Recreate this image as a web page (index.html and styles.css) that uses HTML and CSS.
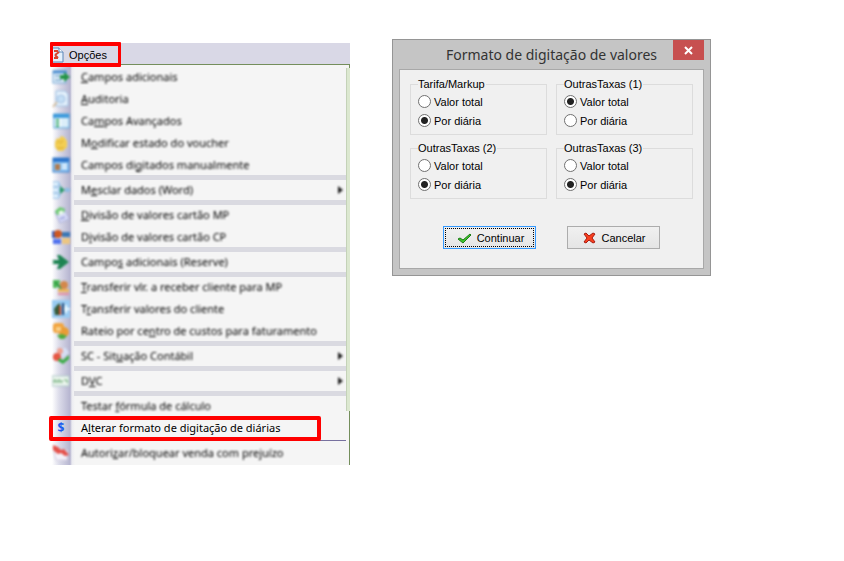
FILE: index.html
```html
<!DOCTYPE html>
<html lang="pt-BR">
<head>
    <meta charset="UTF-8">
    <title>Formato de digitação de valores</title>
    <meta name="viewport" content="width=device-width, initial-scale=1.0">
    <link rel="stylesheet" href="styles.css">
</head>
<body>
    <nav class="menu">
        <div class="menu-bar">
            <button type="button" class="menu-title marked">
                <svg width="12" height="16" viewBox="0 0 12 16"><path d="M0 1h7l4 4v10H0z" fill="#e4f0fc" stroke="#5a86b8"/><path d="M7 1v4h4" fill="#fff" stroke="#5a86b8"/><path d="M2 4h4M3 8l4-3M2 11h4M3 8l3 3" stroke="#d8432c" stroke-width="2"/></svg>
                Opções
            </button>
        </div>
        <ul class="menu-list">
            <li><button type="button" class="item faded">
                <svg viewBox="0 0 18 18"><rect x="1" y="3" width="13" height="12" fill="#e8f3fb" stroke="#6fa3d4"/><path d="M1 4h14" stroke="#4d8fd0" stroke-width="3"/><path d="M3 8h7M3 12h7" stroke="#92b8d8" stroke-width="2"/><path d="M8 7h4V4l6 5-6 5v-3H8z" fill="#239446"/></svg>
                <span><u>C</u>ampos adicionais</span></button></li>
            <li><button type="button" class="item faded">
                <svg viewBox="0 0 18 18"><path d="M4 1h9l3 3v12H4z" fill="#e5f1fc" stroke="#9abfe2"/><circle cx="9" cy="9" r="4" fill="#c4def5" stroke="#a3c2e2"/><path d="M5 12l-4 5" stroke="#d6bf9f" stroke-width="2"/></svg>
                <span><u>A</u>uditoria</span></button></li>
            <li><button type="button" class="item faded">
                <svg viewBox="0 0 18 18"><rect x="2" y="2" width="15" height="14" fill="#f2fafe" stroke="#54a3d8"/><path d="M1 4h16" stroke="#3f9bdc" stroke-width="4"/><path d="M4 8h3M4 11h3M4 14h3" stroke="#38a86a" stroke-width="2"/><path d="M9 8h7M9 11h7M9 14h7" stroke="#cfe8f7" stroke-width="2"/></svg>
                <span>Ca<u>m</u>pos Avançados</span></button></li>
            <li><button type="button" class="item faded">
                <svg viewBox="0 0 18 18"><path d="M3 8l2-4 2 1 2-3 3 1 3 4v6l-4 4H6l-3-4z" fill="#f3ce52"/><path d="M5 9l3-3M8 10l3-4M5 14h7" stroke="#d9a92b" stroke-width="1"/></svg>
                <span>M<u>o</u>dificar estado do voucher</span></button></li>
            <li><button type="button" class="item faded">
                <svg viewBox="0 0 18 18"><rect x="1" y="2" width="16" height="14" fill="#8fc4f2" stroke="#397fc9"/><path d="M1 4h16" stroke="#2d76cc" stroke-width="4"/><rect x="3" y="8" width="5" height="6" fill="#b07b50"/><path d="M10 9h5M10 12h5" stroke="#eef7ff" stroke-width="2"/></svg>
                <span>Campos di<u>g</u>itados manualmente</span></button></li>
            <li class="sep"></li>
            <li><button type="button" class="item faded">
                <svg viewBox="0 0 18 18"><path d="M1 1h6v4H1M1 7h6v4H1M1 13h6v4H1" fill="#eaf6ff" stroke="#82b9e6"/><path d="M7 3l4 6-4 6M7 9h4" fill="none" stroke="#6aaedf"/><path d="M8 5l5 4-5 4z" fill="#2b9969"/><rect x="13" y="7" width="5" height="4" fill="#8fbce2"/></svg>
                <span>M<u>e</u>sclar dados (Word)</span><i class="arrow"></i></button></li>
            <li class="sep"></li>
            <li><button type="button" class="item faded">
                <svg viewBox="0 0 18 18"><path d="M3 6l9-4 5 11-9 4z" fill="#d9dcf8" stroke="#a9aed8"/><path d="M3 5l5-4 5 2-1 4-7 2z" fill="#6cc96f"/><path d="M6 6l4-2 2 3-4 2z" fill="#eefaf0"/><path d="M8 13l5-2" stroke="#a9b0e2" stroke-width="2"/></svg>
                <span><u>D</u>ivisão de valores cartão MP</span></button></li>
            <li><button type="button" class="item faded">
                <svg viewBox="0 0 18 18"><rect x="0" y="3" width="5" height="7" fill="#365fc0"/><circle cx="6" cy="6" r="4" fill="#ce5822"/><rect x="10" y="4" width="8" height="5" fill="#3c78b4"/><path d="M1 11h8v5H1z" fill="#5273ee"/><path d="M10 10h8v6h-8z" fill="#ecc681"/></svg>
                <span>D<u>i</u>visão de valores cartão CP</span></button></li>
            <li class="sep"></li>
            <li><button type="button" class="item faded">
                <svg viewBox="0 0 18 18"><path d="M0 7h7L5 2h3l9 7-9 7H5l2-5H0l2-2z" fill="#1c8451"/></svg>
                <span>Campo<u>s</u> adicionais (Reserve)</span></button></li>
            <li class="sep"></li>
            <li><button type="button" class="item faded">
                <svg viewBox="0 0 18 18"><path d="M1 2h7v3H5v5H1z" fill="#55bd5d"/><path d="M3 4l7 7" stroke="#34a044" stroke-width="3"/><circle cx="12" cy="7" r="4" fill="#d3884b"/><path d="M6 11h11v3H6z" fill="#edb65c"/><path d="M6 16h11" stroke="#e58ca0" stroke-width="2"/></svg>
                <span><u>T</u>ransferir vlr. a receber cliente para MP</span></button></li>
            <li><button type="button" class="item faded">
                <svg viewBox="0 0 18 18"><rect width="18" height="18" fill="#99cbf2"/><path d="M2 9l3-4 3-2v12H3z" fill="#375a38"/><path d="M8 6v9" stroke="#c64a28" stroke-width="2"/><path d="M11 3v12" stroke="#264a78" stroke-width="2"/><path d="M14 5v8M12 9h6" stroke="#eefaff" stroke-width="2"/></svg>
                <span>T<u>r</u>ansferir valores do cliente</span></button></li>
            <li><button type="button" class="item faded">
                <svg viewBox="0 0 18 18"><rect x="1" y="1" width="11" height="10" rx="3" fill="#f2a540"/><circle cx="12" cy="10" r="5" fill="#e99d35"/><path d="M4 5h5v4H4z" fill="#f8d08a"/><path d="M5 13l5-1 5 2-3 3H8z" fill="#4fac3e"/></svg>
                <span>Rateio por ce<u>n</u>tro de custos para faturamento</span></button></li>
            <li class="sep"></li>
            <li><button type="button" class="item faded">
                <svg viewBox="0 0 18 18"><path d="M6 1h8l3 5-5 4H6z" fill="#d5def4"/><circle cx="8" cy="4" r="3" fill="#f0a08e"/><circle cx="5" cy="10" r="4" fill="#e65743"/><path d="M7 11l4 2 6-5v4l-6 5-5-3z" fill="#3dac48"/></svg>
                <span>SC - Sit<u>u</u>ação Contábil</span><i class="arrow"></i></button></li>
            <li class="sep"></li>
            <li><button type="button" class="item faded">
                <svg viewBox="0 0 18 18"><rect x="0" y="4" width="17" height="10" fill="#eef7f0" stroke="#abc6c4"/><path d="M2 11V8h2v3M6 11V8h2v3M10 11V8M12 8h3v3" fill="none" stroke="#62a56c" stroke-width="1"/></svg>
                <span>D<u>V</u>C</span><i class="arrow"></i></button></li>
            <li class="sep"></li>
            <li><button type="button" class="item faded">
                <svg viewBox="0 0 18 18"></svg>
                <span>Testar <u>f</u>órmula de cálculo</span></button></li>
            <li><button type="button" class="item marked">
                <b class="dollar">$</b>
                <span>A<u>l</u>terar formato de digitação de diárias</span></button></li>
            <li class="sep thin"></li>
            <li><button type="button" class="item faded">
                <svg viewBox="0 0 18 18"><path d="M2 8l13-2v10H4z" fill="#f4f2fa" stroke="#d5cfe2"/><path d="M1 1l5 2 3 3 3-1 5 6-4 1-4-3-3 1-5-4z" fill="#e5504a"/></svg>
                <span>Autori<u>z</u>ar/bloquear venda com prejuízo</span></button></li>
        </ul>
    </nav>

    <form class="dialog" onsubmit="return false">
        <header class="dialog-title">
            <h1>Formato de digitação de valores</h1>
            <button type="button" class="close" aria-label="Fechar">
                <svg width="9" height="9" viewBox="0 0 9 9"><path d="M1 1l7 7M8 1L1 8" stroke="#fff" stroke-width="2"/></svg>
            </button>
        </header>
        <div class="dialog-body">
            <div class="groups">
                <fieldset>
                    <legend>Tarifa/Markup</legend>
                    <label><input type="radio" name="tarifa">Valor total</label>
                    <label><input type="radio" name="tarifa" checked>Por diária</label>
                </fieldset>
                <fieldset>
                    <legend>OutrasTaxas (1)</legend>
                    <label><input type="radio" name="taxas1" checked>Valor total</label>
                    <label><input type="radio" name="taxas1">Por diária</label>
                </fieldset>
                <fieldset>
                    <legend>OutrasTaxas (2)</legend>
                    <label><input type="radio" name="taxas2">Valor total</label>
                    <label><input type="radio" name="taxas2" checked>Por diária</label>
                </fieldset>
                <fieldset>
                    <legend>OutrasTaxas (3)</legend>
                    <label><input type="radio" name="taxas3">Valor total</label>
                    <label><input type="radio" name="taxas3" checked>Por diária</label>
                </fieldset>
            </div>
            <div class="actions">
                <button type="submit" class="btn default">
                    <svg width="15" height="12" viewBox="0 0 15 12"><path d="M1 7l2-1 3 2 7-6 1 1-8 8z" fill="#3fc32c" stroke="#1c7d16"/></svg>
                    Continuar
                </button>
                <button type="button" class="btn">
                    <svg width="13" height="12" viewBox="0 0 13 12"><path d="M1 2l2-1 3 3 4-3 2 1-3 4 3 4-2 1-4-3-3 3-2-1 3-4z" fill="#f8401e" stroke="#a81a10"/></svg>
                    Cancelar
                </button>
            </div>
        </div>
    </form>
</body>
</html>
```
FILE: styles.css
```css
* {
    box-sizing: border-box;
}
body {
    margin: 0;
    padding: 39px 50px;
    background: #fff;
    color: #000;
    font-family: "Liberation Sans", Arial, sans-serif;
    font-size: 11px;
    display: flex;
    align-items: flex-start;
    gap: 42px;
}
button {
    font: inherit;
    color: inherit;
    border: none;
    margin: 0;
    padding: 0;
}

/* Menu */
.menu {
    flex: 0 1 300px;
    margin-top: 4px;
}
.menu-bar {
    background: #d9d8e6;
    border-bottom: 1px solid #748e5c;
}
.menu-title {
    display: flex;
    align-items: center;
    gap: 5px;
    height: 21px;
    padding: 2px 14px 0 2px;
    background: none;
}
.menu-list {
    list-style: none;
    margin: 0;
    padding: 1px 3px 1px 0;
    position: relative;
    border-right: 1px solid #748e5c;
    background: linear-gradient(to right, #fff 0, #fff 2px, #dcdcea 9px, #b6b5d0 20px, #ececf1 22px, #f5f5f5 25px);
}
/* lighter stretch of the right edge */
.menu-list::after {
    content: "";
    position: absolute;
    top: 3px;
    right: -1px;
    bottom: 54px;
    width: 3px;
    background: #dce8d0;
    border-left: 1px solid #c4d2b8;
}
.item {
    display: flex;
    align-items: center;
    width: 100%;
    height: 22px;
    padding-left: 2px;
    background: none;
    font-family: "Noto Sans", "Open Sans", sans-serif;
    font-size: 11px;
    text-align: left;
    white-space: nowrap;
}
.item span {
    padding-bottom: 2px;
}
.item svg {
    width: 18px;
    height: 18px;
    margin-right: 11px;
}
.item.faded svg,
.item.faded span,
.arrow {
    filter: blur(1px);
}
.dollar {
    width: 18px;
    margin-right: 11px;
    padding-bottom: 2px;
    color: #1a5cf0;
    font-size: 12px;
    text-align: center;
}
.arrow {
    margin-left: auto;
    margin-right: 3px;
    border: 4px solid transparent;
    border-left: 5px solid #222;
    border-right: none;
}
.sep {
    height: 5px;
    margin: -1px 0 -1px 24px;
    background: #dadae1;
}
.sep.thin {
    height: 1px;
    margin: 1px 0 1px 24px;
    background: #77719f;
}
.marked {
    position: relative;
    z-index: 1;
}
.marked::after {
    content: "";
    position: absolute;
    inset: -1px 0 -3px 0;
    border: 4px solid #f00;
    border-right-width: 3px;
    border-left-width: 3px;
    border-radius: 1px;
}
.item.marked::after {
    inset: -1px 25px -2px -1px;
    border-width: 4px;
    border-radius: 2px;
}

/* Dialog */
.dialog {
    flex: 0 1 319px;
    padding: 0 6px 6px;
    background: #c5c5c5;
    border: 1px solid #959595;
}
.dialog-title {
    position: relative;
    height: 29px;
}
.dialog-title h1 {
    margin: 0;
    font-family: "Noto Sans", "Open Sans", sans-serif;
    font-size: 14px;
    font-weight: normal;
    line-height: 30px;
    color: #333;
    text-align: center;
    white-space: nowrap;
}
.close {
    position: absolute;
    top: 0;
    right: 0;
    display: flex;
    align-items: center;
    justify-content: center;
    width: 31px;
    height: 20px;
    background: #c75050;
}
.dialog-body {
    padding: 8px 10px 19px;
    background: #f0f0f0;
    border: 1px solid #a8a8a8;
}
.groups {
    display: grid;
    grid-template-columns: 1fr 1fr;
    gap: 7px 9px;
}
fieldset {
    min-width: 0;
    margin: 0;
    padding: 1px 7px 4px;
    border: 1px solid #dcdcdc;
}
legend {
    padding: 0 1px 0 0;
    line-height: 13px;
}
fieldset label {
    display: flex;
    align-items: center;
    gap: 3px;
    height: 19px;
}
input[type="radio"] {
    appearance: none;
    width: 13px;
    height: 13px;
    margin: 0;
    border: 1px solid #707070;
    border-radius: 50%;
    background: #fff;
}
input[type="radio"]:checked {
    background: radial-gradient(circle, #222 3px, #fff 4px);
}
.actions {
    display: flex;
    justify-content: center;
    gap: 31px;
    margin-top: 27px;
}
.btn {
    display: flex;
    align-items: center;
    justify-content: center;
    gap: 5px;
    width: 93px;
    height: 23px;
    padding-left: 2px;
    border: 1px solid #acacac;
    background: linear-gradient(#f0f0f0, #e5e5e5);
}
.btn.default {
    border-color: #3399ff;
    outline: 1px dotted #000;
    outline-offset: -3px;
}
```
